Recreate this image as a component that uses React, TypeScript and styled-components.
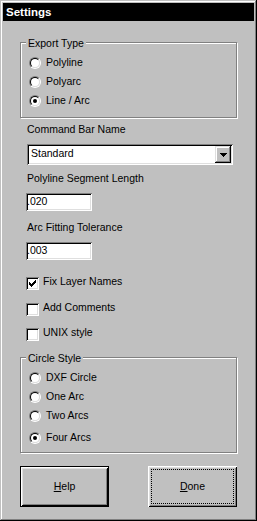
import React from "react";
import styled, { createGlobalStyle } from "styled-components";

const Global = createGlobalStyle`
  html, body { margin: 0; padding: 0; background: #c0c0c0; }
  body { font-family: "Liberation Sans", Arial, sans-serif; }
  *, *::before, *::after { box-sizing: border-box; }
`;

const Window = styled.div`
  width: 257px;
  height: 521px;
  background: #c0c0c0;
  padding: 3px;
  box-shadow: inset -1px -1px #000, inset 1px 1px #c0c0c0, inset -2px -2px #808080, inset 2px 2px #fff;
  display: flex;
  flex-direction: column;
  font-family: "Liberation Sans", Arial, sans-serif;
  font-size: 10.5px;
  color: #000;
`;

const TitleBar = styled.div`
  height: 18px;
  background: #000;
  color: #fff;
  font-weight: bold;
  font-size: 11.5px;
  line-height: 18px;
  padding-left: 3px;
`;

const Body = styled.div`
  padding: 21px 17px 0 17px;
  display: flex;
  flex-direction: column;
`;

const Group = styled.div<{ $padBottom: number }>`
  position: relative;
  border: 1px solid #808080;
  box-shadow: inset 1px 1px #fff, 1px 1px #fff;
  padding: 10px 0 ${(p) => p.$padBottom}px 8px;
  display: flex;
  flex-direction: column;
`;

const Legend = styled.span`
  position: absolute;
  top: -6px;
  left: 5px;
  padding: 0 2px;
  background: #c0c0c0;
  line-height: 13px;
`;

const RadioRow = styled.div<{ $mt?: number }>`
  height: 19px;
  display: flex;
  align-items: center;
  gap: 5px;
  line-height: 13px;
  margin-top: ${(p) => p.$mt ?? 0}px;
`;

const RadioOuter = styled.span`
  width: 12px;
  height: 12px;
  border-radius: 50%;
  border: 1px solid;
  border-color: #808080 #fff #fff #808080;
  display: flex;
  flex: none;
`;

const RadioInner = styled.span`
  width: 10px;
  height: 10px;
  border-radius: 50%;
  border: 1px solid;
  border-color: #000 #dfdfdf #dfdfdf #000;
  background: #fff;
  display: flex;
  align-items: center;
  justify-content: center;
`;

const RadioDot = styled.span<{ $on: boolean }>`
  width: 4px;
  height: 4px;
  border-radius: 50%;
  background: ${(p) => (p.$on ? "#000" : "transparent")};
`;

const Fields = styled.div`
  padding-left: 6px;
  display: flex;
  flex-direction: column;
  align-items: flex-start;
`;

const FieldLabel = styled.div<{ $mt: number }>`
  line-height: 13px;
  margin-left: 1px;
  margin-top: ${(p) => p.$mt}px;
`;

const sunken = `box-shadow: inset 1px 1px #808080, inset -1px -1px #fff, inset 2px 2px #000, inset -2px -2px #dfdfdf;`;

const Combo = styled.div`
  width: 206px;
  height: 21px;
  margin: 8px 0 0 1px;
  background: #fff;
  ${sunken}
  padding: 2px;
  display: flex;
`;

const ComboText = styled.span`
  flex: 1;
  padding-left: 2px;
  line-height: 15px;
`;

const DropButton = styled.span`
  width: 16px;
  background: #c0c0c0;
  box-shadow: inset -1px -1px #000, inset 1px 1px #dfdfdf, inset -2px -2px #808080, inset 2px 2px #fff;
  display: flex;
  align-items: center;
  justify-content: center;
`;

const TextField = styled.div`
  width: 66px;
  height: 18px;
  margin-top: 8px;
  background: #fff;
  ${sunken}
  padding: 2px 1px 0 1px;
  line-height: 12px;
`;

const CheckList = styled.div`
  margin-top: 15px;
  display: flex;
  flex-direction: column;
  gap: 12.5px;
`;

const CheckRow = styled.div`
  height: 13px;
  display: flex;
  align-items: flex-start;
  gap: 4px;
  line-height: 13px;
`;

const CheckBox = styled.span`
  width: 13px;
  height: 13px;
  margin-top: 2px;
  background: #fff;
  ${sunken}
  padding: 3px;
  display: flex;
  flex: none;
`;

const Spacer = styled.div<{ $h: number }>`
  height: ${(p) => p.$h}px;
  flex: none;
`;

const ButtonRow = styled.div`
  margin-top: 13px;
  display: flex;
  gap: 39px;
`;

const Button = styled.button<{ $default?: boolean; $focused?: boolean }>`
  width: 90px;
  height: 41px;
  padding: 0;
  margin: 0;
  background: #c0c0c0;
  font-family: "Liberation Sans", Arial, sans-serif;
  font-size: 10.5px;
  line-height: 13px;
  color: #000;
  border: ${(p) => (p.$default ? "1px solid #000" : "none")};
  box-shadow: inset 1px 1px #fff, inset -1px -1px #000, inset 2px 2px #dfdfdf, inset -2px -2px #808080;
  outline: ${(p) => (p.$focused ? "1px dotted #000" : "none")};
  outline-offset: -4px;
`;

const Check = () => (
  <svg width="7" height="7" viewBox="0 0 7 7" shapeRendering="crispEdges">
    <path
      fill="#000"
      d="M6 0h1v1h-1z M5 1h2v1h-2z M0 2h1v1h-1z M4 2h3v1h-3z M0 3h2v1h-2z M3 3h3v1h-3z M0 4h5v1h-5z M1 5h3v1h-3z M2 6h1v1h-1z"
    />
  </svg>
);

const Arrow = () => (
  <svg width="7" height="4" viewBox="0 0 7 4" shapeRendering="crispEdges">
    <path fill="#000" d="M0 0h7v1h-7z M1 1h5v1h-5z M2 2h3v1h-3z M3 3h1v1h-1z" />
  </svg>
);

const Radio = ({ label, on, mt }: { label: string; on?: boolean; mt?: number }) => (
  <RadioRow $mt={mt}>
    <RadioOuter>
      <RadioInner>
        <RadioDot $on={!!on} />
      </RadioInner>
    </RadioOuter>
    <span>{label}</span>
  </RadioRow>
);

const CheckItem = ({ label, on }: { label: string; on?: boolean }) => (
  <CheckRow>
    <CheckBox>{on && <Check />}</CheckBox>
    <span>{label}</span>
  </CheckRow>
);

export default function App() {
  return (
    <>
      <Global />
      <Window>
        <TitleBar>Settings</TitleBar>
        <Body>
          <Group $padBottom={7}>
            <Legend>Export Type</Legend>
            <Radio label="Polyline" />
            <Radio label="Polyarc" />
            <Radio label="Line / Arc" on />
          </Group>
          <Fields>
            <FieldLabel $mt={5}>Command Bar Name</FieldLabel>
            <Combo>
              <ComboText>Standard</ComboText>
              <DropButton>
                <Arrow />
              </DropButton>
            </Combo>
            <FieldLabel $mt={7}>Polyline Segment Length</FieldLabel>
            <TextField>.020</TextField>
            <FieldLabel $mt={10}>Arc Fitting Tolerance</FieldLabel>
            <TextField>.003</TextField>
            <CheckList>
              <CheckItem label="Fix Layer Names" on />
              <CheckItem label="Add Comments" />
              <CheckItem label="UNIX style" />
            </CheckList>
          </Fields>
          <Spacer $h={18} />
          <Group $padBottom={5}>
            <Legend>Circle Style</Legend>
            <Radio label="DXF Circle" />
            <Radio label="One Arc" />
            <Radio label="Two Arcs" />
            <Radio label="Four Arcs" on mt={3} />
          </Group>
          <ButtonRow>
            <Button $default>
              <u>H</u>elp
            </Button>
            <Button $focused>
              <u>D</u>one
            </Button>
          </ButtonRow>
        </Body>
      </Window>
    </>
  );
}
